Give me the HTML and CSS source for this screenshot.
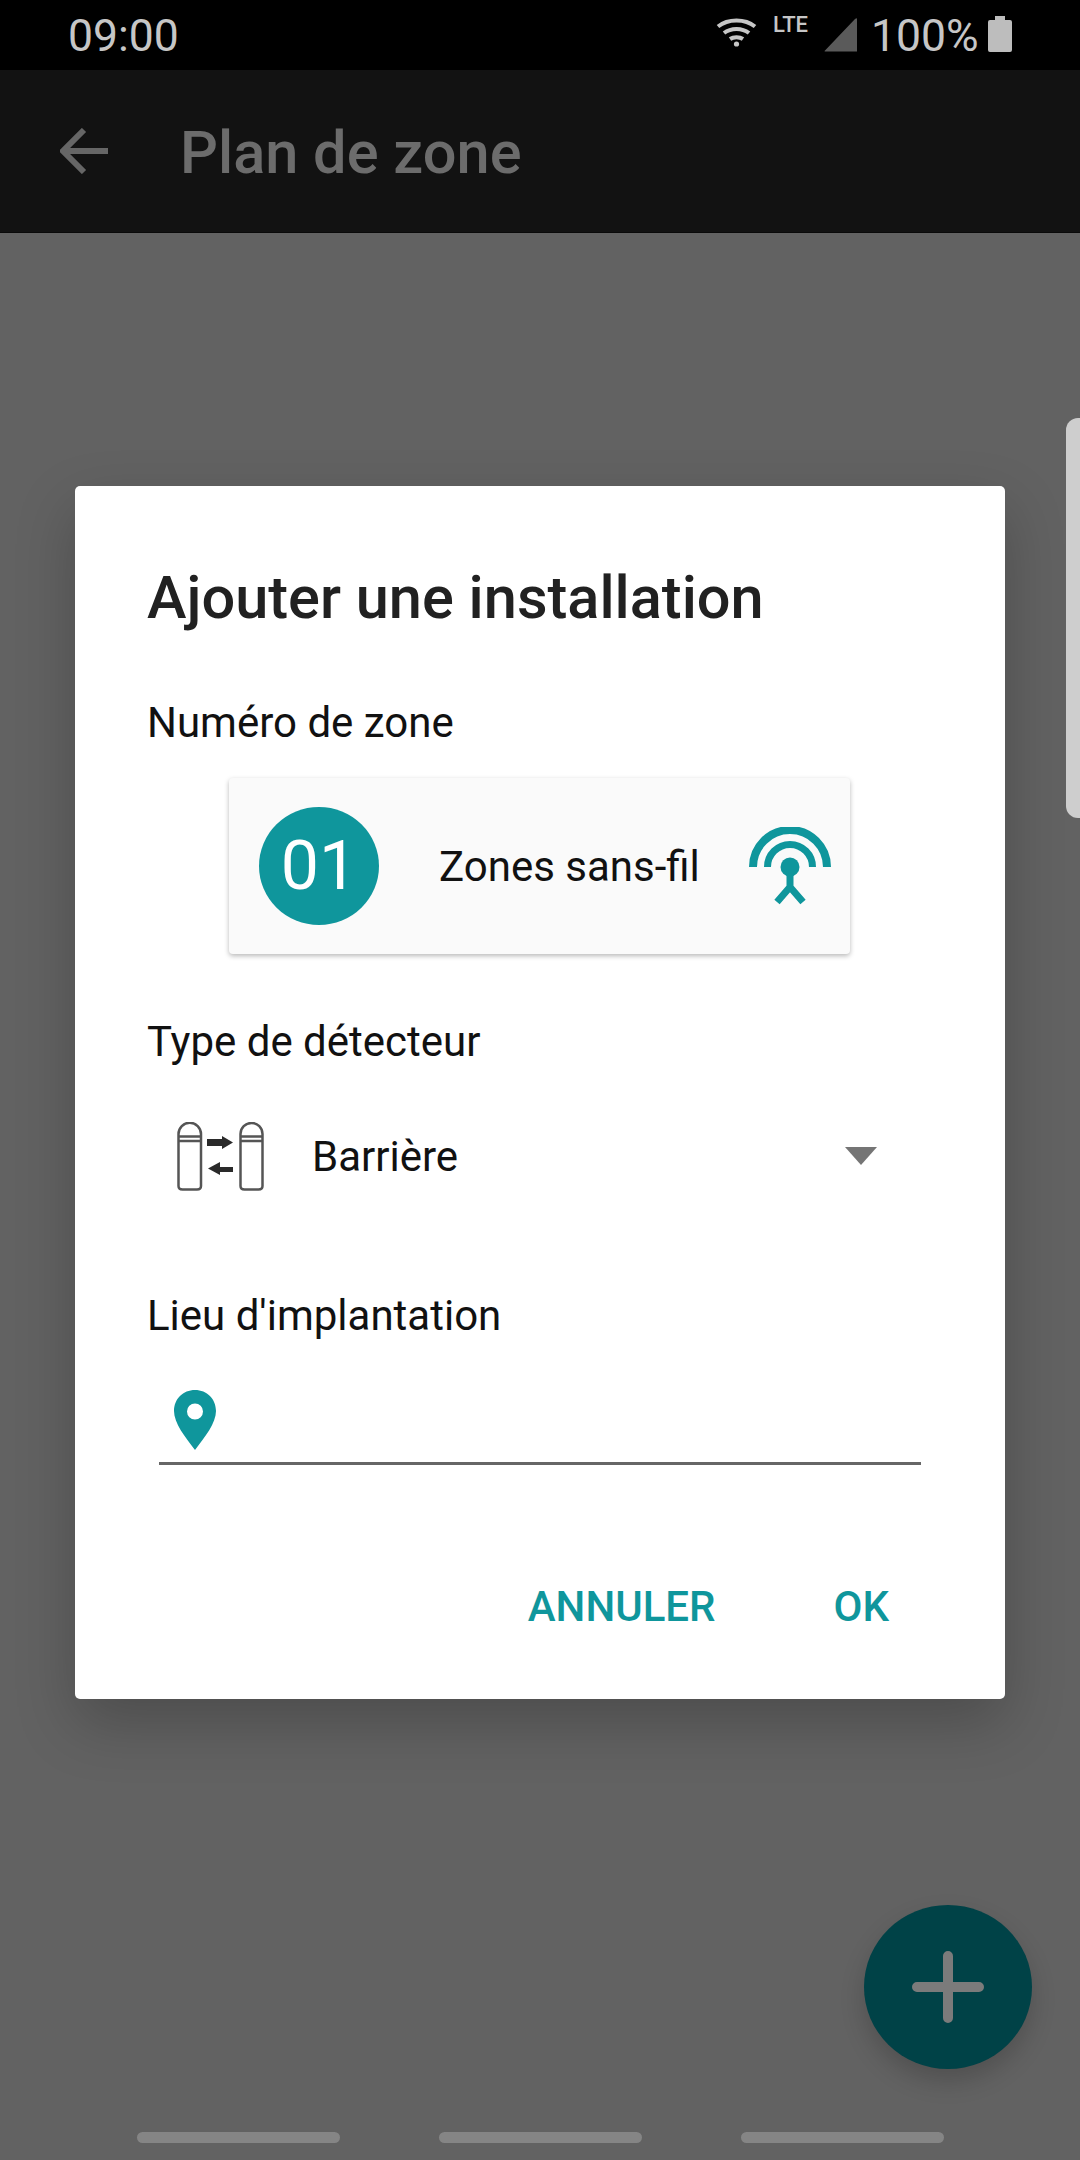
FILE: index.html
```html
<!DOCTYPE html>
<html lang="fr">

<head>
    <meta charset="UTF-8">
    <meta name="viewport" content="width=device-width, initial-scale=1.0">
    <title>Plan de zone</title>
    <link rel="stylesheet" href="styles.css">
</head>

<body>
    <div class="screen">
        <div class="status-bar">
            <span class="clock">09:00</span>
            <svg class="wifi-icon" width="41" height="30" viewBox="0 0 41 30">
                <path d="M2 9.5C12 1.5 29 1.500 39 9.500" />
                <path d="M8 16C15 10.500 26 10.500 33 16" />
                <path d="M14 22C17.500 19.500 23.500 19.500 27 22" />
                <circle cx="20.500" cy="27" r="2.600" />
            </svg>
            <span class="lte">LTE</span>
            <svg class="signal-icon" width="34" height="34" viewBox="0 0 34 34">
                <path d="M33 1V33.500H1.500Q0 33.500 1 32.500L31 1Q33 -0.500 33 1Z" />
            </svg>
            <span class="battery-text">100%</span>
            <svg class="battery-icon" width="24" height="36" viewBox="0 0 24 36">
                <path d="M7 0H17V4H22Q24 4 24 6V34Q24 36 22 36H2Q0 36 0 34V6Q0 4 2 4H7Z" />
            </svg>
        </div>

        <div class="app-bar">
            <svg class="back-icon" width="50" height="46" viewBox="0 0 50 46">
                <path d="M48 23H4M24 2L3 23L24 44" />
            </svg>
            <span class="app-title">Plan de zone</span>
        </div>

        <div class="content">
            <div class="nav-hints">
                <span class="nav-hint"></span>
                <span class="nav-hint"></span>
                <span class="nav-hint"></span>
            </div>
        </div>

        <div class="edge-tab"></div>

        <div class="fab">
            <svg width="72" height="72" viewBox="0 0 72 72">
                <path d="M36 5V67M5 36H67" />
            </svg>
        </div>

        <div class="dialog">
            <h1 class="dialog-title">Ajouter une installation</h1>

            <div class="field-label zone-label">Numéro de zone</div>
            <div class="zone-card">
                <div class="zone-number">01</div>
                <div class="zone-name">Zones sans-fil</div>
                <svg class="antenna-icon" width="82" height="78" viewBox="0 0 82 78">
                    <path class="arc" d="M4 40A37 37 0 0 1 78 40" stroke-width="8" />
                    <path class="arc" d="M18.500 40A22.500 22.500 0 0 1 63.500 40" stroke-width="7" />
                    <circle cx="41" cy="40" r="9.500" />
                    <path class="arc" d="M41 42V60M41 60L28 75M41 60L54 75" stroke-width="7" />
                </svg>
            </div>

            <div class="field-label detector-label">Type de détecteur</div>
            <div class="detector-select">
                <svg class="barrier-icon" width="87" height="69" viewBox="0 0 87 69">
                    <g class="outline">
                        <path d="M1.500 12A11 11 0 0 1 24 12V64Q24 67.500 20 67.500H5.500Q1.500 67.500 1.500 64Z" />
                        <path d="M1.500 14.500H24M1.500 19H24" />
                        <path d="M63.500 12A11 11 0 0 1 85.500 12V64Q85.500 67.500 81.500 67.500H67.500Q63.500 67.500 63.500 64Z" />
                        <path d="M63.500 14.500H85.500M63.500 19H85.500" />
                    </g>
                    <path class="arrow" d="M30 17H45V14L56 20.500L45 27V24H30Z" />
                    <path class="arrow" d="M56 45H43V40L31 46.500L43 53V50H56Z" />
                </svg>
                <span class="detector-name">Barrière</span>
                <span class="dropdown-arrow"></span>
            </div>

            <div class="field-label place-label">Lieu d'implantation</div>
            <div class="place-input">
                <svg class="pin-icon" width="42" height="60" viewBox="0 0 42 60">
                    <path fill-rule="evenodd" d="M21 0C33 0 42 9 42 21C42 33 31 47 21 60C11 47 0 33 0 21C0 9 9 0 21 0ZM21 13.500A8 8 0 1 0 21 29.500A8 8 0 1 0 21 13.500Z" />
                </svg>
            </div>

            <div class="dialog-actions">
                <span class="action">ANNULER</span>
                <span class="action">OK</span>
            </div>
        </div>
    </div>
</body>

</html>
```

FILE: styles.css
```css
* {
    box-sizing: border-box;
}

body {
    margin: 0;
    font-family: Roboto, "Liberation Sans", sans-serif;
}

.screen {
    position: relative;
    display: flex;
    flex-direction: column;
    width: 1080px;
    height: 2160px;
    overflow: hidden;
    background-color: #626262;
}

/* Status bar */
.status-bar {
    display: flex;
    align-items: flex-start;
    height: 70px;
    padding: 16px 0 0 68px;
    background-color: #000;
    color: #c6c6c6;
}

.clock {
    width: 648px;
    font-size: 44.500px;
    line-height: 40px;
    font-weight: 400;
}

.wifi-icon {
    margin-top: 1px;
}

.wifi-icon path {
    fill: none;
    stroke: #c6c6c6;
    stroke-width: 4;
}

.wifi-icon circle {
    fill: #c6c6c6;
}

.lte {
    margin: 0 0 0 16px;
    width: 51px;
    font-size: 22px;
    line-height: 18px;
    font-weight: 500;
}

.signal-icon {
    margin-top: 2px;
    fill: #5a5a5a;
}

.battery-text {
    margin-left: 13px;
    width: 117px;
    font-size: 44.500px;
    line-height: 40px;
    font-weight: 400;
}

.battery-icon {
    fill: #bdbdbd;
}

/* App bar */
.app-bar {
    display: flex;
    align-items: center;
    height: 163px;
    padding-left: 60px;
    background-color: #121212;
    border-bottom: 1px solid #0a0a0a;
}

.back-icon {
    fill: none;
    stroke: #666;
    stroke-width: 6;
}

.app-title {
    margin-left: 70px;
    padding-top: 4px;
    font-size: 59.500px;
    font-weight: 500;
    color: #6c6c6c;
}

/* Page behind the dialog */
.content {
    flex: 1;
    display: flex;
    flex-direction: column;
    justify-content: flex-end;
}

.nav-hints {
    display: flex;
    justify-content: center;
    gap: 99px;
    padding-bottom: 17px;
}

.nav-hint {
    width: 203px;
    height: 11px;
    border-radius: 6px;
    background-color: #858585;
}

.edge-tab {
    position: absolute;
    top: 418px;
    left: 1066px;
    width: 30px;
    height: 400px;
    border-radius: 12px;
    background-color: #cecece;
}

.fab {
    position: absolute;
    top: 1905px;
    left: 864px;
    display: flex;
    align-items: center;
    justify-content: center;
    width: 168px;
    height: 164px;
    border-radius: 50%;
    background-color: #004247;
    box-shadow: 0 12px 24px rgba(0, 0, 0, 0.18);
}

.fab path {
    fill: none;
    stroke: #7b7b7b;
    stroke-width: 10;
    stroke-linecap: round;
}

/* Dialog */
.dialog {
    position: absolute;
    top: 486px;
    left: 75px;
    width: 930px;
    height: 1213px;
    padding: 80px 0 0 72px;
    border-radius: 5px;
    background-color: #fff;
    box-shadow: 0 24px 60px rgba(0, 0, 0, 0.22);
}

.dialog-title {
    margin: 0;
    font-size: 59.500px;
    line-height: 64px;
    font-weight: 500;
    color: #212121;
}

.field-label {
    height: 48px;
    font-size: 42px;
    line-height: 48px;
    color: #111;
}

.zone-label {
    margin-top: 69px;
}

.zone-card {
    display: flex;
    align-items: center;
    width: 621px;
    height: 176px;
    margin: 31px 0 0 82px;
    padding: 0 19px 0 30px;
    border-radius: 4px;
    background-color: #fafafa;
    box-shadow: 0 2px 5px rgba(0, 0, 0, 0.28);
}

.zone-number {
    display: flex;
    align-items: center;
    justify-content: center;
    width: 120px;
    height: 118px;
    border-radius: 50%;
    background-color: #0f969c;
    color: #fff;
    font-size: 68px;
}

.zone-name {
    margin-left: 60px;
    font-size: 42px;
    color: #111;
}

.antenna-icon {
    margin-left: auto;
    fill: #0f969c;
}

.antenna-icon .arc {
    fill: none;
    stroke: #0f969c;
}

.detector-label {
    margin-top: 64px;
}

.detector-select {
    display: flex;
    align-items: center;
    width: 731px;
    height: 100px;
    margin-top: 40px;
    padding-left: 30px;
}

.barrier-icon .outline {
    fill: none;
    stroke: #555;
    stroke-width: 2.500;
}

.barrier-icon .arrow {
    fill: #2a2a2a;
}

.detector-name {
    margin-left: 48px;
    font-size: 42px;
    color: #111;
}

.dropdown-arrow {
    margin-left: auto;
    margin-right: 1px;
    border-top: 18px solid #757575;
    border-left: 16px solid transparent;
    border-right: 16px solid transparent;
}

.place-label {
    margin-top: 86px;
}

.place-input {
    width: 762px;
    height: 85px;
    margin: 40px 0 0 12px;
    padding: 10px 0 0 15px;
    border-bottom: 3px solid #666;
}

.pin-icon {
    display: block;
    fill: #0f969c;
}

.dialog-actions {
    display: flex;
    justify-content: flex-end;
    gap: 118px;
    margin-top: 102px;
    padding-right: 116px;
}

.action {
    font-size: 42px;
    line-height: 80px;
    font-weight: 500;
    color: #0f969c;
}
```
